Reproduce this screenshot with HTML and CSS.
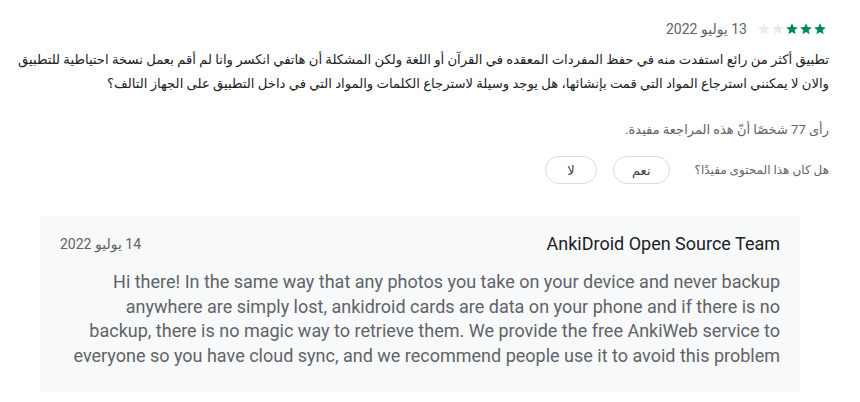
FILE: index.html
```html
<!DOCTYPE html>
<html lang="ar" dir="rtl">
<head>
<meta charset="utf-8">
<link rel="stylesheet" href="styles.css">
</head>
<body>
<div class="review">
  <div class="review-head">
    <div class="stars">
      <svg class="star full" viewBox="0 0 24 24"><path d="M12 17.27L18.18 21l-1.64-7.03L22 9.24l-7.19-.61L12 2 9.19 8.63 2 9.24l5.46 4.73L5.82 21z"/></svg>
      <svg class="star full" viewBox="0 0 24 24"><path d="M12 17.27L18.18 21l-1.64-7.03L22 9.24l-7.19-.61L12 2 9.19 8.63 2 9.24l5.46 4.73L5.82 21z"/></svg>
      <svg class="star full" viewBox="0 0 24 24"><path d="M12 17.27L18.18 21l-1.64-7.03L22 9.24l-7.19-.61L12 2 9.19 8.63 2 9.24l5.46 4.73L5.82 21z"/></svg>
      <svg class="star empty" viewBox="0 0 24 24"><path d="M12 17.27L18.18 21l-1.64-7.03L22 9.24l-7.19-.61L12 2 9.19 8.63 2 9.24l5.46 4.73L5.82 21z"/></svg>
      <svg class="star empty" viewBox="0 0 24 24"><path d="M12 17.27L18.18 21l-1.64-7.03L22 9.24l-7.19-.61L12 2 9.19 8.63 2 9.24l5.46 4.73L5.82 21z"/></svg>
    </div>
    <span class="date">13 يوليو 2022</span>
  </div>
  <div class="review-text">تطبيق أكثر من رائع استفدت منه في حفظ المفردات المعقده في القرآن أو اللغة ولكن المشكلة أن هاتفي انكسر وانا لم أقم بعمل نسخة احتياطية للتطبيق والان لا يمكنني استرجاع المواد التي قمت بإنشائها، هل يوجد وسيلة لاسترجاع الكلمات والمواد التي في داخل التطبيق على الجهاز التالف؟</div>
  <div class="helpful-count">رأى 77 شخصًا أنّ هذه المراجعة مفيدة.</div>
  <div class="helpful-row">
    <span class="question">هل كان هذا المحتوى مفيدًا؟</span>
    <div class="buttons">
      <button class="pill">نعم</button>
      <button class="pill">لا</button>
    </div>
  </div>
  <div class="reply">
    <div class="reply-head">
      <span class="dev">AnkiDroid Open Source Team</span>
      <span class="reply-date">14 يوليو 2022</span>
    </div>
    <p class="reply-text" dir="ltr">Hi there! In the same way that any photos you take on your device and never backup anywhere are simply lost, ankidroid cards are data on your phone and if there is no backup, there is no magic way to retrieve them. We provide the free AnkiWeb service to everyone so you have cloud sync, and we recommend people use it to avoid this problem</p>
  </div>
</div>
</body>
</html>
```

FILE: styles.css
```css
html, body {
  margin: 0;
  padding: 0;
  background: #ffffff;
}
body {
  font-family: Roboto, "DejaVu Sans", Arial, sans-serif;
  color: #202124;
}
.review {
  padding: 19px 31px 0 0;
}
.review-head {
  display: flex;
  align-items: center;
  gap: 10px;
  height: 20px;
}
.stars {
  display: flex;
  gap: 0;
  margin-right: 2px;
}
.star {
  width: 14px;
  height: 14px;
}
.star.full { fill: #01875f; }
.star.empty { fill: #e8eaed; }
.date {
  font-size: 14px;
  color: #5f6368;
  line-height: 20px;
}
.review-text {
  margin-top: 9px;
  font-size: 13.2px;
  line-height: 24px;
  color: #202124;
}
.helpful-count {
  margin-top: 26px;
  font-size: 13px;
  line-height: 16px;
  color: #5f6368;
}
.helpful-row {
  margin-top: 18px;
  display: flex;
  align-items: center;
  gap: 25px;
}
.question {
  font-size: 12px;
  color: #5f6368;
}
.buttons {
  display: flex;
  gap: 16px;
}
.pill {
  font-family: Roboto, "DejaVu Sans", Arial, sans-serif;
  height: 28px;
  padding: 0 18px;
  min-width: 52px;
  border: 1px solid #dadce0;
  border-radius: 14px;
  background: #ffffff;
  color: #3c4043;
  font-size: 13px;
  font-weight: 500;
}
.reply {
  margin: 32px 29px 10px 40px;
  background: #f8f9fa;
  padding: 16px 20px 23px 20px;
}
.reply-head {
  display: flex;
  justify-content: space-between;
  align-items: center;
  line-height: 24px;
}
.dev {
  font-size: 18px;
  color: #202124;
}
.reply-date {
  font-size: 14px;
  color: #5f6368;
}
.reply-text {
  margin: 14px 0 0 10px;
  text-align: right;
  font-size: 18px;
  line-height: 24.7px;
  color: #5f6368;
}
```
